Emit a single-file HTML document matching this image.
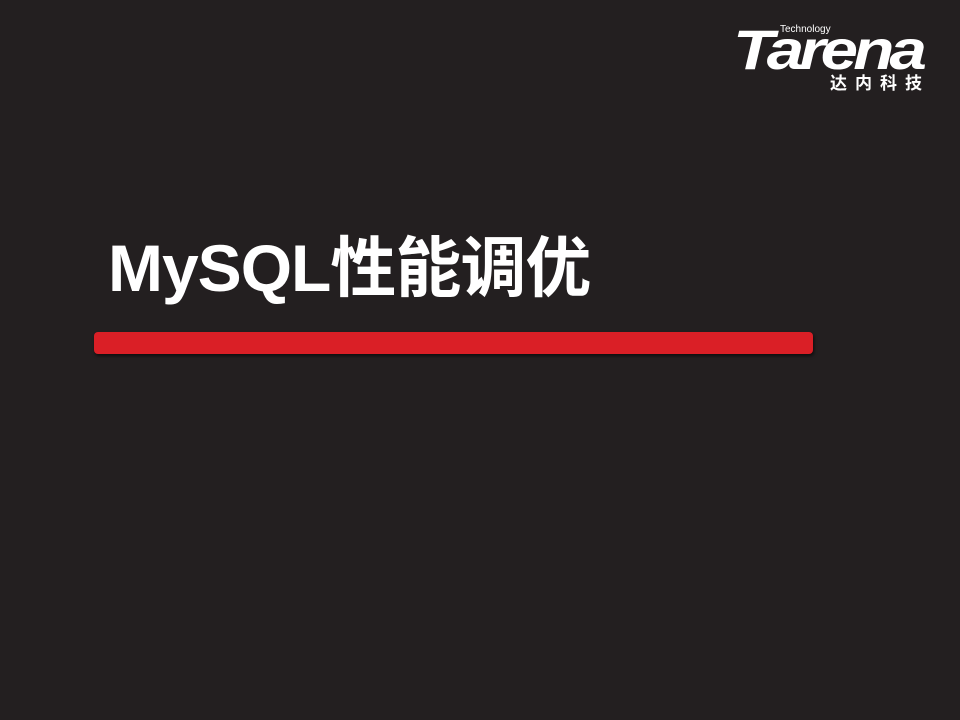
<!DOCTYPE html>
<html><head><meta charset="utf-8"><style>
body{margin:0;width:960px;height:720px;background:#231f20;position:relative;overflow:hidden;font-family:"Liberation Sans","Noto Sans CJK SC",sans-serif}
.t{position:absolute;left:108px;top:228px;color:#fff;font-size:66px;font-weight:bold;line-height:80px;white-space:nowrap;letter-spacing:-1px}
.bar{position:absolute;left:94px;top:332px;width:719px;height:22px;background:#da1f26;border-radius:4px;box-shadow:1px 2px 3px rgba(0,0,0,.6)}
.logo{position:absolute;left:733px;top:22px;color:#fff;font-weight:bold;font-style:italic;font-size:56px;line-height:56px;letter-spacing:-4px;transform:scaleX(1.2);transform-origin:left}
.tech{position:absolute;left:780px;top:24px;color:#fff;font-size:10px;line-height:12px}
.cn{position:absolute;left:830px;top:74px;color:#fff;font-size:17px;font-weight:bold;letter-spacing:8px;line-height:20px}
</style></head><body>
<div class="logo">Tarena</div>
<div class="tech">Technology</div>
<div class="cn">达内科技</div>
<div class="t">MySQL性能调优</div>
<div class="bar"></div>
</body></html>
